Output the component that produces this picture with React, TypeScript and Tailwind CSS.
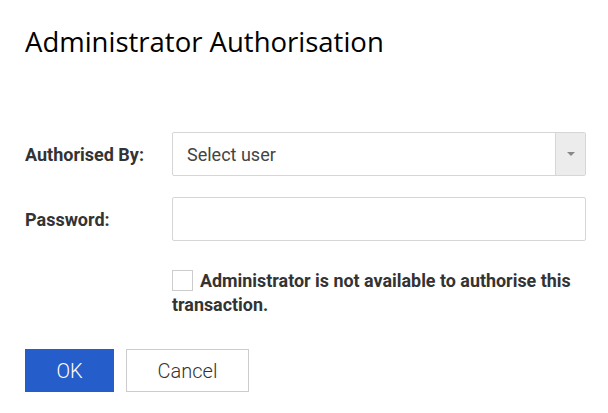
export default function App() {
  return (
    <div className="w-[608px] h-[413px] bg-white pl-[25px] pr-[22px] pt-[22px] font-['Roboto',sans-serif] text-[#333]">
      <h1 className="font-['Open_Sans',sans-serif] text-[27.5px] leading-[40px] text-black">
        Administrator Authorisation
      </h1>

      <div className="mt-[70px] flex flex-col gap-[21px]">
        <div className="flex items-center">
          <label className="w-[147px] text-[18px] font-bold">Authorised By:</label>
          <div className="flex h-[44px] flex-1 border border-[#d6d6d6] rounded-[2px]">
            <div className="flex flex-1 items-center px-[14px] text-[18px] text-[#444]">Select user</div>
            <div className="flex w-[30px] items-center justify-center border-l border-[#d6d6d6] bg-[#ececec]">
              <svg width="8" height="4" viewBox="0 0 8 4">
                <path d="M0 0 L8 0 L4 4 Z" fill="#888" />
              </svg>
            </div>
          </div>
        </div>

        <div className="flex items-center">
          <label className="w-[147px] text-[18px] font-bold">Password:</label>
          <input type="password" className="h-[44px] flex-1 border border-[#d6d6d6] rounded-[2px] outline-none px-3" />
        </div>
      </div>

      <div className="ml-[147px] mt-[28px] text-[17.9px] font-bold leading-[24px]">
        <span className="inline-block w-[21px] h-[21px] border border-[#ccc] bg-white align-[-4px] mr-[7px]"></span>
        Administrator is not available to authorise this transaction.
      </div>

      <div className="mt-[32px] flex gap-[12px]">
        <button className="h-[43px] w-[89px] bg-[#255dcb] text-white text-[20px] font-light">OK</button>
        <button className="h-[43px] w-[123px] border border-[#ccc] bg-white text-[20px] font-light text-[#333]">Cancel</button>
      </div>
    </div>
  )
}
